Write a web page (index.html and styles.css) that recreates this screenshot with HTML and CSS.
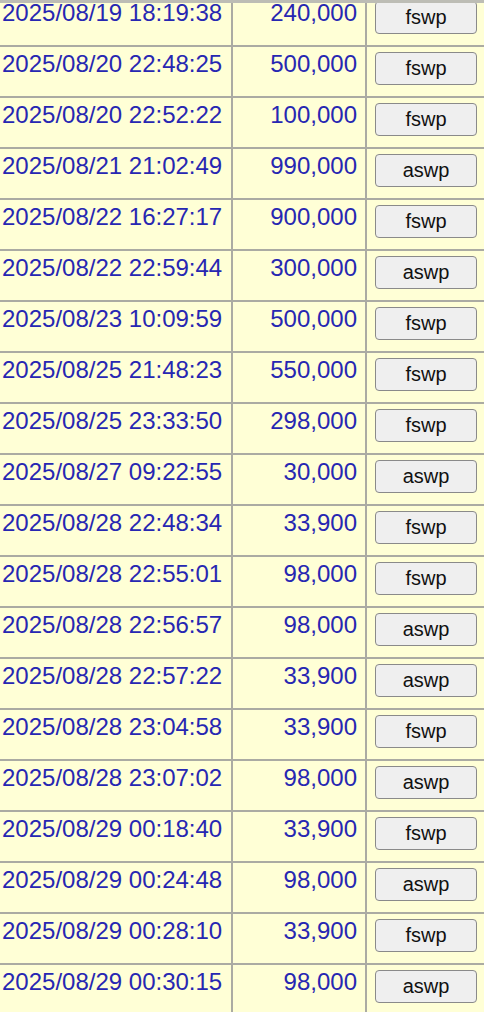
FILE: index.html
```html
<html>
<head>
    <title>Swap History</title>
    <link rel="stylesheet" href="styles.css">
</head>
<body>
    <div class="top-edge"></div>
    <table class="history">
        <colgroup>
            <col class="col-date">
            <col class="col-amount">
            <col class="col-action">
        </colgroup>
        <tbody id="rows"></tbody>
    </table>

    <script>
        var rows = [
            ['2025/08/19 18:19:38', '240,000', 'fswp'],
            ['2025/08/20 22:48:25', '500,000', 'fswp'],
            ['2025/08/20 22:52:22', '100,000', 'fswp'],
            ['2025/08/21 21:02:49', '990,000', 'aswp'],
            ['2025/08/22 16:27:17', '900,000', 'fswp'],
            ['2025/08/22 22:59:44', '300,000', 'aswp'],
            ['2025/08/23 10:09:59', '500,000', 'fswp'],
            ['2025/08/25 21:48:23', '550,000', 'fswp'],
            ['2025/08/25 23:33:50', '298,000', 'fswp'],
            ['2025/08/27 09:22:55', '30,000', 'aswp'],
            ['2025/08/28 22:48:34', '33,900', 'fswp'],
            ['2025/08/28 22:55:01', '98,000', 'fswp'],
            ['2025/08/28 22:56:57', '98,000', 'aswp'],
            ['2025/08/28 22:57:22', '33,900', 'aswp'],
            ['2025/08/28 23:04:58', '33,900', 'fswp'],
            ['2025/08/28 23:07:02', '98,000', 'aswp'],
            ['2025/08/29 00:18:40', '33,900', 'fswp'],
            ['2025/08/29 00:24:48', '98,000', 'aswp'],
            ['2025/08/29 00:28:10', '33,900', 'fswp'],
            ['2025/08/29 00:30:15', '98,000', 'aswp']
        ];

        var tbody = document.getElementById('rows');
        rows.forEach(function(r) {
            var tr = document.createElement('tr');
            tr.innerHTML = '<td class="date">' + r[0] + '</td>' +
                '<td class="amount">' + r[1] + '</td>' +
                '<td class="action"><button class="swap-btn">' + r[2] + '</button></td>';
            tbody.appendChild(tr);
        });
    </script>
</body>
</html>
```

FILE: styles.css
```css
body {
    margin: 0;
    background-color: #ffffd6;
    font-family: "Liberation Sans", Arial, sans-serif;
    overflow: hidden;
}
.top-edge {
    position: absolute;
    top: 0;
    left: 0;
    width: 100%;
    height: 3px;
    background-color: #bdbdb5;
}
.history {
    border-collapse: collapse;
    table-layout: fixed;
    width: 500px;
    margin-top: -6px;
    margin-left: -2px;
}
.col-date {
    width: 233px;
}
.col-amount {
    width: 134px;
}
.col-action {
    width: 133px;
}
.history td {
    border: 2px solid #ababa3;
    height: 51px;
    padding: 3px 4px 0 2px;
    vertical-align: top;
    font-size: 24px;
    line-height: 28px;
    color: #2727b2;
    white-space: nowrap;
}
.history td.amount {
    text-align: right;
    padding-right: 8px;
}
.history td.action {
    padding: 5px 7px 0 8px;
}
.swap-btn {
    width: 102px;
    height: 33px;
    font-family: "Liberation Sans", Arial, sans-serif;
    font-size: 20px;
    color: #111;
    background-color: #efefef;
    border: 1px solid #8a8a8a;
    border-radius: 4px;
    padding: 0;
}
```
